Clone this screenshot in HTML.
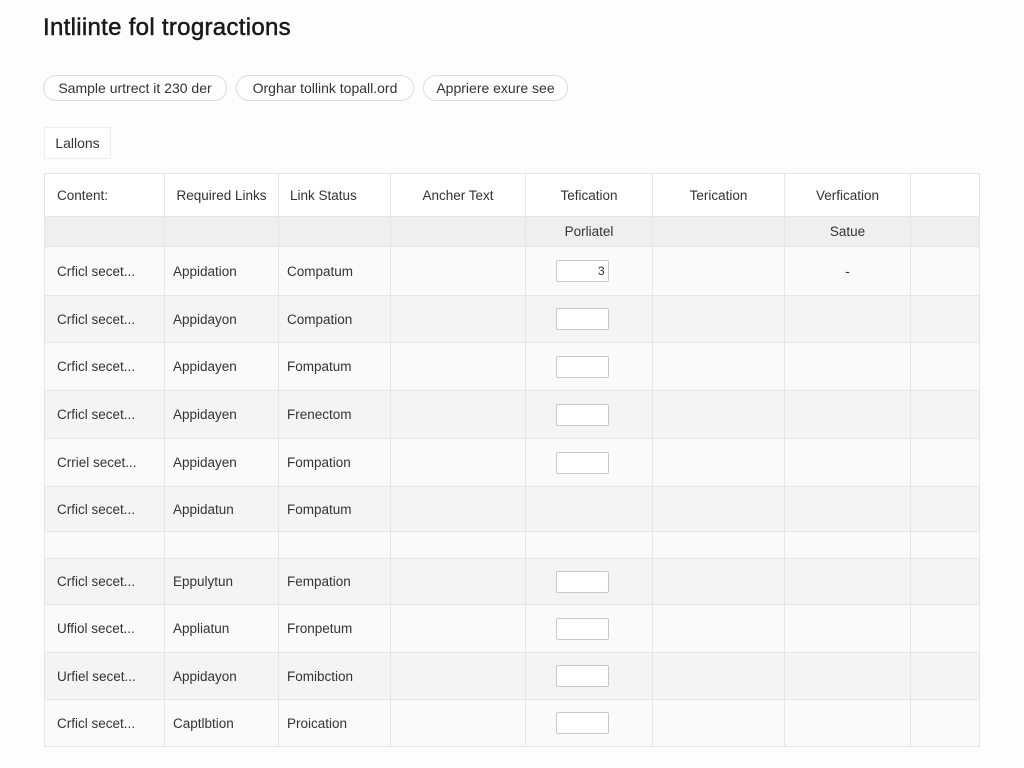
<!DOCTYPE html>
<html><head><meta charset="utf-8"><style>
body{margin:0;width:1024px;height:768px;background:#fdfdfd;font-family:"Liberation Sans",sans-serif;color:#333;position:relative;overflow:hidden}
h1{position:absolute;left:43px;top:14px;margin:0;font-size:24px;font-weight:normal;color:#1a1a1a;letter-spacing:0.3px;-webkit-text-stroke:0.5px #1a1a1a}
.pill{position:absolute;top:75px;height:24px;border:1px solid #ddd;border-radius:13px;background:#fff;font-size:14px;line-height:24px;text-align:center;color:#333}
.tab{position:absolute;left:44px;top:127px;width:65px;height:30px;border:1px solid #eee;background:#fff;font-size:14px;line-height:30px;text-align:center}
table{position:absolute;left:44px;top:173px;border-collapse:collapse;table-layout:fixed;width:935px;font-size:13.5px}
td{border:1px solid #e6e6e6;padding:0;white-space:nowrap;overflow:hidden}
td:first-child{padding-left:12px}
tr.h td{background:#fff;height:42px;text-align:center}
tr.s td{background:#efefef;height:29px;text-align:center}
.a td{background:#fafafa}.b td{background:#f4f4f4}
.c2{padding-left:8px}.c3{padding-left:8px}
.in{display:inline-block;width:51px;height:20px;border:1px solid #c8c8c8;border-radius:2px;background:#fff;vertical-align:middle;text-align:right;font-size:12px;line-height:20px;box-sizing:content-box}
.ctr{padding-left:30px}
.mid{text-align:center}
</style></head><body>
<h1>Intliinte fol trogractions</h1>
<div class="pill" style="left:43px;width:182px">Sample urtrect it 230 der</div>
<div class="pill" style="left:236px;width:176px">Orghar tollink topall.ord</div>
<div class="pill" style="left:423px;width:143px">Appriere exure see</div>
<div class="tab">Lallons</div>
<table>
<colgroup><col style="width:120px"><col style="width:114px"><col style="width:112px"><col style="width:135px"><col style="width:127px"><col style="width:132px"><col style="width:126px"><col style="width:69px"></colgroup>
<tr class="h"><td style="text-align:left">Content:</td><td>Required Links</td><td style="text-align:left;padding-left:11px">Link Status</td><td>Ancher Text</td><td>Tefication</td><td>Terication</td><td>Verfication</td><td></td></tr>
<tr class="s"><td></td><td></td><td></td><td></td><td>Porliatel</td><td></td><td>Satue</td><td></td></tr>
<tr class="a" style="height:49px"><td>Crficl secet...</td><td class="c2">Appidation</td><td class="c3">Compatum</td><td></td><td class="ctr"><span class="in">3&nbsp;</span></td><td></td><td class="mid">-</td><td></td></tr>
<tr class="b" style="height:47px"><td>Crficl secet...</td><td class="c2">Appidayon</td><td class="c3">Compation</td><td></td><td class="ctr"><span class="in"></span></td><td></td><td></td><td></td></tr>
<tr class="a" style="height:48px"><td>Crficl secet...</td><td class="c2">Appidayen</td><td class="c3">Fompatum</td><td></td><td class="ctr"><span class="in"></span></td><td></td><td></td><td></td></tr>
<tr class="b" style="height:48px"><td>Crficl secet...</td><td class="c2">Appidayen</td><td class="c3">Frenectom</td><td></td><td class="ctr"><span class="in"></span></td><td></td><td></td><td></td></tr>
<tr class="a" style="height:48px"><td>Crriel secet...</td><td class="c2">Appidayen</td><td class="c3">Fompation</td><td></td><td class="ctr"><span class="in"></span></td><td></td><td></td><td></td></tr>
<tr class="b" style="height:45px"><td>Crficl secet...</td><td class="c2">Appidatun</td><td class="c3">Fompatum</td><td></td><td></td><td></td><td></td><td></td></tr>
<tr class="a" style="height:27px"><td></td><td></td><td></td><td></td><td></td><td></td><td></td><td></td></tr>
<tr class="b" style="height:46px"><td>Crficl secet...</td><td class="c2">Eppulytun</td><td class="c3">Fempation</td><td></td><td class="ctr"><span class="in"></span></td><td></td><td></td><td></td></tr>
<tr class="a" style="height:48px"><td>Uffiol secet...</td><td class="c2">Appliatun</td><td class="c3">Fronpetum</td><td></td><td class="ctr"><span class="in"></span></td><td></td><td></td><td></td></tr>
<tr class="b" style="height:47px"><td>Urfiel secet...</td><td class="c2">Appidayon</td><td class="c3">Fomibction</td><td></td><td class="ctr"><span class="in"></span></td><td></td><td></td><td></td></tr>
<tr class="a" style="height:47px"><td>Crficl secet...</td><td class="c2">Captlbtion</td><td class="c3">Proication</td><td></td><td class="ctr"><span class="in"></span></td><td></td><td></td><td></td></tr>
</table>
</body></html>
